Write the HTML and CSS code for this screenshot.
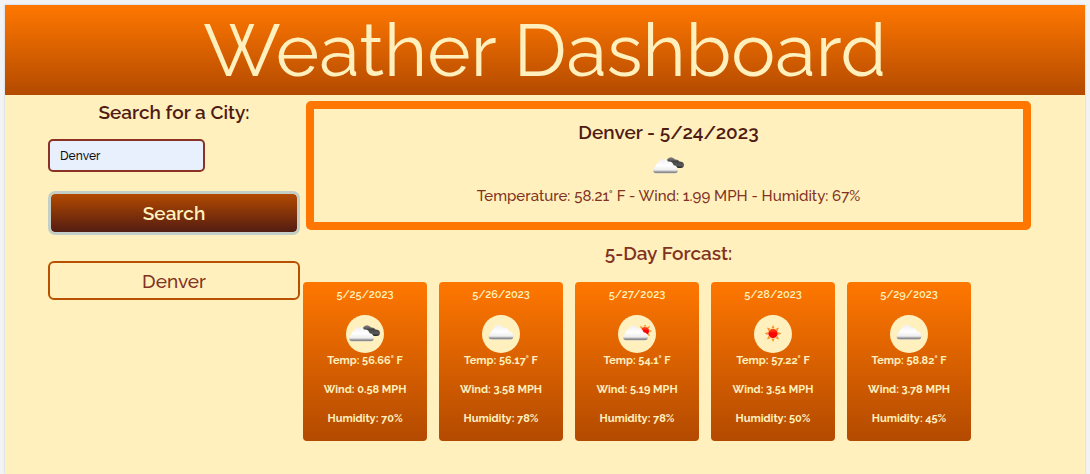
FILE: index.html
```
<!DOCTYPE html>
<html lang="en">
<head>
<meta charset="utf-8">
<title>Weather Dashboard</title>
<link rel="stylesheet" href="styles.css">
</head>
<body>
<svg class="sprite" aria-hidden="true">
  <defs>
    <linearGradient id="white-cloud" x1="0" y1="0" x2="0" y2="1">
      <stop offset="0" stop-color="#f0f0f0"/><stop offset=".45" stop-color="#fff"/><stop offset=".76" stop-color="#eee"/><stop offset=".86" stop-color="#aaa"/><stop offset=".93" stop-color="#888"/><stop offset="1" stop-color="#ccc"/>
    </linearGradient>
    <linearGradient id="dark-cloud" x1="0" y1="0" x2="0" y2="1">
      <stop offset="0" stop-color="#888"/><stop offset=".4" stop-color="#444"/><stop offset=".75" stop-color="#5a5a5a"/><stop offset="1" stop-color="#222"/>
    </linearGradient>
    <linearGradient id="sun-core" x1="0" y1="0" x2="0" y2="1">
      <stop offset="0" stop-color="#ff5a1f"/><stop offset=".5" stop-color="#f00"/><stop offset="1" stop-color="#f01010"/>
    </linearGradient>
    <path id="cloud" d="M4 15.500C1.500 15.500 0 14 0 12.200C0 10.500 1.200 9.300 2.500 8.500C2.700 6.400 4 4.800 5.500 4.300C6.500 2 8 .8 10 .8C12.500 .8 14 2.200 15 3.800C17.800 3 20 4.900 20.500 7.200C23.500 7.600 25 9.600 25 12C25 14.300 23.500 15.500 21.500 15.500Z"/>
    <g id="sun">
      <path fill="#f79028" d="M0-9L1.700-5.500H-1.700ZM0 9L1.700 5.500H-1.700ZM-9 0L-5.500-1.700V1.700ZM9 0L5.500-1.700V1.700ZM-6.300-6.300L-2.700-5L-5-2.700ZM6.300-6.300L2.700-5L5-2.700ZM-6.300 6.300L-2.700 5L-5 2.700ZM6.300 6.300L2.700 5L5 2.700Z"/>
      <circle r="5" fill="url(#sun-core)"/>
    </g>
    <symbol id="broken" viewBox="0 0 32 18">
      <path fill="url(#dark-cloud)" d="M14 3C15 1 17 0 19 .5Q21 1 22 2.500Q25 2 26.500 4.500Q30.500 4.500 31 7.500Q31 11 27.500 11H18Z"/>
      <use href="#cloud" fill="url(#white-cloud)" transform="translate(0 1)"/>
    </symbol>
    <symbol id="cloudy" viewBox="0 0 32 18">
      <use href="#cloud" fill="url(#white-cloud)" transform="translate(3.500 -.8)"/>
    </symbol>
    <symbol id="partly" viewBox="0 0 32 18">
      <use href="#sun" transform="translate(24 6) scale(.8)"/>
      <use href="#cloud" fill="url(#white-cloud)" transform="translate(2 0)"/>
    </symbol>
    <symbol id="clear" viewBox="0 0 32 18">
      <use href="#sun" transform="translate(16 8.500) scale(.94)"/>
    </symbol>
  </defs>
</svg>
<div class="page">
  <header class="banner"><h1>Weather Dashboard</h1></header>
  <main class="content">
    <aside class="sidebar">
      <form class="search">
        <label class="search-label" for="city">Search for a City:</label>
        <input class="search-input" id="city" type="text" value="Denver">
        <button class="search-button" type="button">Search</button>
      </form>
      <button class="history-button" type="button">Denver</button>
    </aside>
    <div class="results">
      <section class="current">
        <h2>Denver - 5/24/2023</h2>
        <svg class="icon" role="img" aria-label="Broken clouds"><use href="#broken"/></svg>
        <p>Temperature: 58.21° F - Wind: 1.99 MPH - Humidity: 67%</p>
      </section>
      <h2 class="forecast-title">5-Day Forcast:</h2>
      <section class="forecast">
        <article class="day"><h3>5/25/2023</h3><span class="badge"><svg class="icon"><use href="#broken"/></svg></span><p>Temp: 56.66° F</p><p>Wind: 0.58 MPH</p><p>Humidity: 70%</p></article>
        <article class="day"><h3>5/26/2023</h3><span class="badge"><svg class="icon"><use href="#cloudy"/></svg></span><p>Temp: 56.17° F</p><p>Wind: 3.58 MPH</p><p>Humidity: 78%</p></article>
        <article class="day"><h3>5/27/2023</h3><span class="badge"><svg class="icon"><use href="#partly"/></svg></span><p>Temp: 54.1° F</p><p>Wind: 5.19 MPH</p><p>Humidity: 78%</p></article>
        <article class="day"><h3>5/28/2023</h3><span class="badge"><svg class="icon"><use href="#clear"/></svg></span><p>Temp: 57.22° F</p><p>Wind: 3.51 MPH</p><p>Humidity: 50%</p></article>
        <article class="day"><h3>5/29/2023</h3><span class="badge"><svg class="icon"><use href="#cloudy"/></svg></span><p>Temp: 58.82° F</p><p>Wind: 3.78 MPH</p><p>Humidity: 45%</p></article>
      </section>
    </div>
  </main>
</div>
</body>
</html>
```

FILE: styles.css
```
* { box-sizing: border-box; }
body {
  margin: 0;
  padding: 5px 5px 0;
  min-height: 100vh;
  display: flex;
  background: #f1f3f4;
  color: #813323;
  font-family: Raleway, Lato, sans-serif;
  font-weight: 500;
}
h1, h2, h3, p { margin: 0; }
button, input { font: inherit; }
.sprite { position: absolute; width: 0; height: 0; }
.page {
  flex: 1;
  background: #fff0bd;
  box-shadow: 0 0 2px #c4cbd0;
}
.banner {
  background: linear-gradient(#ff7700, #b34a00);
  color: #fff0bd;
  text-align: center;
}
.banner h1 {
  font-size: 74px;
  line-height: 90px;
  font-weight: 400;
}
.content {
  display: flex;
  gap: 3px;
  padding: 6px 51px 32px 43px;
}
.sidebar {
  flex: 0 0 252px;
  display: flex;
  flex-direction: column;
  gap: 26px;
}
.search {
  display: flex;
  flex-direction: column;
  align-items: stretch;
}
.search-label {
  color: #4f1b13;
  font-size: 19px;
  line-height: 22px;
  font-weight: 600;
  text-align: center;
}
.search-input {
  width: 157px;
  height: 33px;
  margin: 16px 0 19px;
  padding: 0 10px;
  border: 2px solid #8a3324;
  border-radius: 5px;
  background: #e8f0fe;
  color: #111;
  font-size: 12px;
}
.search-button {
  height: 44px;
  border: 3px solid #c3cfc6;
  border-radius: 7px;
  background: linear-gradient(#b34a00, #531c12) padding-box;
  color: #fff0bd;
  font-size: 19px;
  font-weight: 600;
}
.history-button {
  height: 39px;
  border: 2px solid #b95000;
  border-radius: 6px;
  background: transparent;
  color: #813323;
  font-size: 19px;
}
.results { flex: 1; }
.current {
  margin: 0 3px;
  padding: 12px 8px 15px;
  border: 8px solid #ff7700;
  border-radius: 5px;
  display: flex;
  flex-direction: column;
  align-items: center;
}
h2 {
  color: #4f1b13;
  font-size: 19px;
  line-height: 22px;
  font-weight: 600;
}
.icon { width: 32px; height: 18px; }
.current .icon { margin: 14px 0 10px; }
.current p { font-size: 15px; line-height: 22px; }
.forecast-title {
  margin: 12px 0 18px;
  color: #813323;
  text-align: center;
}
.forecast {
  display: grid;
  grid-template-columns: repeat(5, 124px);
  gap: 12px;
}
.day {
  padding: 5px 4px 15px;
  border-radius: 4px;
  background: linear-gradient(#ff7700, #b34a00);
  color: #fff0bd;
  display: flex;
  flex-direction: column;
  align-items: center;
  font-size: 11px;
  line-height: 15px;
  font-weight: 700;
}
.day h3 { font-size: 11px; font-weight: 600; margin-bottom: 13px; }
.badge {
  width: 38px;
  height: 38px;
  border-radius: 50%;
  background: #fff0bd;
  display: flex;
  align-items: center;
  justify-content: center;
}
.day p + p { margin-top: 14px; }
```
